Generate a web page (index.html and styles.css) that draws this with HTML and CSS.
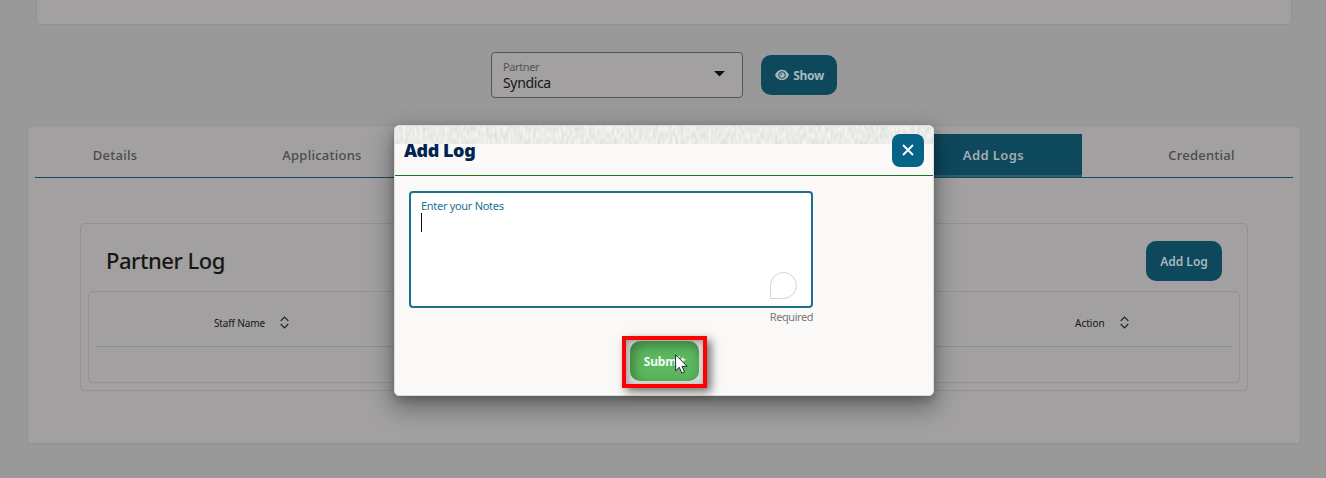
FILE: index.html
```html
<!DOCTYPE html>
<html lang="en">
<head>
<meta charset="utf-8">
<title>Partner Log</title>
<link rel="stylesheet" href="styles.css">
</head>
<body>
<main class="page">
  <section class="card card-top"></section>
  <div class="filter">
    <div class="select">
      <div class="select-text"><span class="select-label">Partner</span><span class="select-value">Syndica</span></div>
      <svg class="caret" width="11" height="6" viewBox="0 0 11 6"><path d="M0 0h11L5.500 5.500z" fill="#111"/></svg>
    </div>
    <button class="btn btn-show">
      <svg width="14" height="12" viewBox="0 0 14 12"><path d="M0 6C3-.9 11-.9 14 6 11 12.900 3 12.900 0 6z" fill="#a9b9bd"/><circle cx="7" cy="6" r="3.300" fill="none" stroke="#0e485d" stroke-width="1"/><path d="M7 4.300A1.800 1.800 0 0 1 5.300 6" fill="none" stroke="#0e485d" stroke-width=".9"/></svg>
      <span>Show</span>
    </button>
  </div>
  <section class="card card-main">
    <nav class="tabs">
      <span class="tab tab-details">Details</span>
      <span class="tab tab-apps">Applications</span>
      <span class="tab tab-logs">Add Logs</span>
      <span class="tab tab-cred">Credential</span>
    </nav>
    <section class="card log">
      <header class="log-head">
        <h1 class="log-title">Partner Log</h1>
        <button class="btn btn-add">Add Log</button>
      </header>
      <div class="card table">
        <div class="row">
          <div class="cell cell-staff"><span class="col-staff">Staff Name</span>
            <svg class="sort" width="9" height="13" viewBox="0 0 9 13"><path d="M.7 4.800 4.500 1l3.800 3.800M.7 8 4.500 11.800 8.300 8" fill="none" stroke="#222" stroke-width="1.200"/></svg>
          </div>
          <div class="cell cell-action"><span class="col-action">Action</span>
            <svg class="sort" width="9" height="13" viewBox="0 0 9 13"><path d="M.7 4.800 4.500 1l3.800 3.800M.7 8 4.500 11.800 8.300 8" fill="none" stroke="#222" stroke-width="1.200"/></svg>
          </div>
        </div>
      </div>
    </section>
  </section>
</main>

<div class="modal">
  <svg class="texture" width="538" height="18">
    <filter id="grain" x="0" y="0" width="100%" height="100%" color-interpolation-filters="sRGB">
      <feTurbulence type="fractalNoise" baseFrequency="0.36 0.15" numOctaves="1" seed="4"/>
      <feColorMatrix values="0.16 0 0 0 0.84  0.16 0 0 0 0.84  0.16 0 0 0 0.836  0 0 0 0 1"/>
    </filter>
    <rect width="538" height="18" filter="url(#grain)"/>
  </svg>
  <header class="modal-head">
    <h2 class="modal-title">Add Log</h2>
    <button class="close" aria-label="Close"><svg width="12" height="12" viewBox="0 0 12 12"><path d="m1 1 10 10m0-10-10 10" stroke="#fff" stroke-width="1.900"/></svg></button>
  </header>
  <div class="modal-body">
    <div class="notes">
      <span class="notes-label">Enter your Notes</span>
      <span class="text-cursor"></span>
      <svg class="bubble" width="28" height="28" viewBox="0 0 28 28"><path d="M.5 26.500V13.500A13 13 0 1 1 13.500 26.500z" fill="#fff" stroke="#d3d3da"/></svg>
    </div>
    <div class="hint"><span>Required</span></div>
    <div class="highlight"><button class="submit">Submit</button></div>
  </div>
  <svg class="pointer" width="13" height="20" viewBox="0 0 13 20"><path d="M.6.8v16l3.700-3.500 2.500 5.900 2.700-1.200-2.500-5.700h5.100z" fill="#fff" stroke="#25253a" stroke-width="1"/></svg>
</div>
</body>
</html>
```

FILE: styles.css
```css
* { box-sizing: border-box; }
body {
  margin: 0;
  width: 1326px;
  height: 478px;
  overflow: hidden;
  position: relative;
  background: #999999;
  font-family: "Noto Sans", "Open Sans", sans-serif;
  color: #161616;
}
h1, h2 { margin: 0; }
button { border: 0; padding: 0; font-family: inherit; }
svg { display: block; flex: none; }
.page { display: flex; flex-direction: column; }
.card { border: 1px solid #939192; border-radius: 5px; background: #a2a0a0; }
.card-top { height: 25px; margin: 0 34px 0 36px; border-top: 0; border-radius: 0 0 5px 5px; }
.filter { display: flex; align-items: center; gap: 18px; height: 46px; margin: 27px 0 27px 491px; }
.select {
  display: flex; justify-content: space-between;
  width: 252px; height: 46px; padding: 6px 17px 0 11px;
  border: 1px solid #565656; border-radius: 4px; background: #a2a0a0;
}
.select-text { display: flex; flex-direction: column; }
.select-label { font-size: 11px; line-height: 15px; color: #555; letter-spacing: -.4px; }
.select-value { font-size: 14px; line-height: 17px; letter-spacing: -.35px; }
.caret { margin-top: 12px; }
.btn {
  display: flex; align-items: center; justify-content: center; gap: 4px;
  width: 76px; height: 40px; border-radius: 10px;
  background: #0e485d; color: #a9b9bd;
  font-size: 12px; font-weight: 700; white-space: nowrap;
}
.btn-show { padding-left: 1px; letter-spacing: -.3px; }
.card-main { height: 319px; margin: 0 25px 0 27px; padding: 8px 7px 0; }
.tabs { display: flex; height: 44px; border-bottom: 1px solid #164b5b; }
.tab {
  display: flex; align-items: center; justify-content: center;
  height: 43px; padding-bottom: 2px; font-size: 13px; font-weight: 500; color: #4b4b4b; letter-spacing: .25px;
}
.tab-details { width: 160px; }
.tab-apps { width: 254px; }
.tab-logs {
  width: 178px; margin-left: 455px; padding: 0 0 0 1px; color: #a4adb0; font-weight: 600;
  background: #0e485d; border-bottom: 2px solid #315f71; letter-spacing: .4px;
}
.tab-cred { width: 183px; margin-left: 28px; }
.log { height: 168px; margin: 45px 45px 0; padding: 17px 7px 0; }
.log-head { display: flex; justify-content: space-between; height: 50px; padding: 0 18px; }
.log-title { font-size: 22px; line-height: 39px; font-weight: 500; letter-spacing: -.46px; }
.btn-add { font-weight: 600; }
.table { height: 92px; padding: 0 7px; }
.row { display: flex; height: 55px; padding-top: 8px; border-bottom: 1px solid #8f8e8f; }
.cell { display: flex; align-items: center; gap: 15px; font-size: 10px; }
.cell-staff { margin-left: 118px; width: 861px; }
.col-staff { letter-spacing: -.15px; }
.sort { margin-bottom: 2px; }

.modal {
  position: absolute; left: 394px; top: 125px; width: 540px; height: 271px;
  border: 1px solid #dededd; border-radius: 5px; background: #faf9f8;
  box-shadow: 0 10px 25px 2px rgba(0,0,0,.36), 0 3px 8px rgba(0,0,0,.2);
}
.texture { position: absolute; left: 0; top: 0; border-radius: 4px 4px 0 0; }
.modal-head {
  position: relative; display: flex; justify-content: space-between;
  height: 50px; padding: 8px 9px 0; border-bottom: 1px solid #18751c;
}
.modal-title { font-size: 18px; line-height: 32px; font-weight: 900; color: #00244f; letter-spacing: -.45px; }
.close {
  display: flex; align-items: center; justify-content: center;
  width: 32px; height: 33px; padding-bottom: 1px; border-radius: 8px; background: #056488;
}
.modal-body { padding: 15px 14px 0; }
.notes {
  display: flex; flex-direction: column; width: 404px; height: 117px; padding: 5px 10px;
  border: 2px solid #1c718f; border-radius: 4px; background: #fff; color: #1c718f;
}
.notes-label { font-size: 11px; line-height: 15px; letter-spacing: -.3px; }
.text-cursor { width: 1px; height: 19px; background: #111; }
.bubble { align-self: flex-end; margin: 40px 3px 0 0; }
.hint { display: flex; justify-content: flex-end; width: 404px; font-size: 11px; line-height: 15px; padding-top: 1px; color: #777; letter-spacing: -.45px; }
.highlight {
  display: flex; align-items: center; justify-content: center;
  width: 85px; height: 52px; margin: 12px 0 0 213px; padding-bottom: 2px;
  border: 4px solid #f00; background: #dddcdb;
  box-shadow: 4px 4px 9px rgba(0,0,0,.55), inset 2px 2px 7px rgba(0,0,0,.3);
}
.submit {
  width: 69px; height: 40px; border-radius: 10px; letter-spacing: -.2px;
  background: #5bb85e; color: #f4fbf4; font-size: 12px; font-weight: 700;
  box-shadow: inset 3px 4px 12px rgba(0,0,0,.35);
}
.pointer { position: absolute; left: 280px; top: 228px; }
```
